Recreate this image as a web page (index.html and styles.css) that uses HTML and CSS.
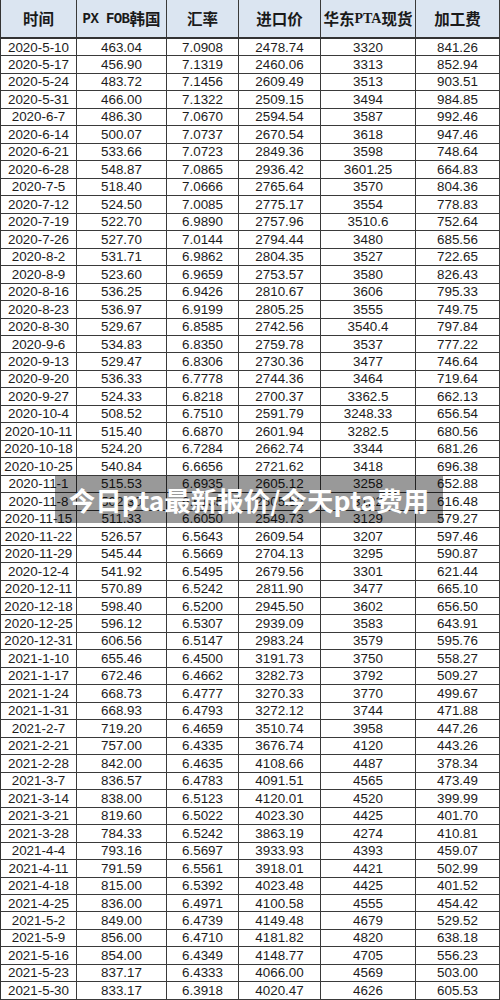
FILE: index.html
```html
<!DOCTYPE html>
<html lang="zh-CN">
<head>
<meta charset="utf-8">
<title>今日pta最新报价/今天pta费用</title>
<link rel="stylesheet" href="styles.css">
</head>
<body>
<div class="page">
  <div class="sheet">
    <div class="row head">
      <div class="c">时间</div>
      <div class="c"><span class="mono">PX FOB</span>韩国</div>
      <div class="c">汇率</div>
      <div class="c">进口价</div>
      <div class="c">华东<span class="serif">PTA</span>现货</div>
      <div class="c">加工费</div>
    </div>
    <div class="row"><div class="c">2020-5-10</div><div class="c">463.04</div><div class="c">7.0908</div><div class="c">2478.74</div><div class="c">3320</div><div class="c">841.26</div></div>
    <div class="row"><div class="c">2020-5-17</div><div class="c">456.90</div><div class="c">7.1319</div><div class="c">2460.06</div><div class="c">3313</div><div class="c">852.94</div></div>
    <div class="row"><div class="c">2020-5-24</div><div class="c">483.72</div><div class="c">7.1456</div><div class="c">2609.49</div><div class="c">3513</div><div class="c">903.51</div></div>
    <div class="row"><div class="c">2020-5-31</div><div class="c">466.00</div><div class="c">7.1322</div><div class="c">2509.15</div><div class="c">3494</div><div class="c">984.85</div></div>
    <div class="row"><div class="c">2020-6-7</div><div class="c">486.30</div><div class="c">7.0670</div><div class="c">2594.54</div><div class="c">3587</div><div class="c">992.46</div></div>
    <div class="row"><div class="c">2020-6-14</div><div class="c">500.07</div><div class="c">7.0737</div><div class="c">2670.54</div><div class="c">3618</div><div class="c">947.46</div></div>
    <div class="row"><div class="c">2020-6-21</div><div class="c">533.66</div><div class="c">7.0723</div><div class="c">2849.36</div><div class="c">3598</div><div class="c">748.64</div></div>
    <div class="row"><div class="c">2020-6-28</div><div class="c">548.87</div><div class="c">7.0865</div><div class="c">2936.42</div><div class="c">3601.25</div><div class="c">664.83</div></div>
    <div class="row"><div class="c">2020-7-5</div><div class="c">518.40</div><div class="c">7.0666</div><div class="c">2765.64</div><div class="c">3570</div><div class="c">804.36</div></div>
    <div class="row"><div class="c">2020-7-12</div><div class="c">524.50</div><div class="c">7.0085</div><div class="c">2775.17</div><div class="c">3554</div><div class="c">778.83</div></div>
    <div class="row"><div class="c">2020-7-19</div><div class="c">522.70</div><div class="c">6.9890</div><div class="c">2757.96</div><div class="c">3510.6</div><div class="c">752.64</div></div>
    <div class="row"><div class="c">2020-7-26</div><div class="c">527.70</div><div class="c">7.0144</div><div class="c">2794.44</div><div class="c">3480</div><div class="c">685.56</div></div>
    <div class="row"><div class="c">2020-8-2</div><div class="c">531.71</div><div class="c">6.9862</div><div class="c">2804.35</div><div class="c">3527</div><div class="c">722.65</div></div>
    <div class="row"><div class="c">2020-8-9</div><div class="c">523.60</div><div class="c">6.9659</div><div class="c">2753.57</div><div class="c">3580</div><div class="c">826.43</div></div>
    <div class="row"><div class="c">2020-8-16</div><div class="c">536.25</div><div class="c">6.9426</div><div class="c">2810.67</div><div class="c">3606</div><div class="c">795.33</div></div>
    <div class="row"><div class="c">2020-8-23</div><div class="c">536.97</div><div class="c">6.9199</div><div class="c">2805.25</div><div class="c">3555</div><div class="c">749.75</div></div>
    <div class="row"><div class="c">2020-8-30</div><div class="c">529.67</div><div class="c">6.8585</div><div class="c">2742.56</div><div class="c">3540.4</div><div class="c">797.84</div></div>
    <div class="row"><div class="c">2020-9-6</div><div class="c">534.83</div><div class="c">6.8350</div><div class="c">2759.78</div><div class="c">3537</div><div class="c">777.22</div></div>
    <div class="row"><div class="c">2020-9-13</div><div class="c">529.47</div><div class="c">6.8306</div><div class="c">2730.36</div><div class="c">3477</div><div class="c">746.64</div></div>
    <div class="row"><div class="c">2020-9-20</div><div class="c">536.33</div><div class="c">6.7778</div><div class="c">2744.36</div><div class="c">3464</div><div class="c">719.64</div></div>
    <div class="row"><div class="c">2020-9-27</div><div class="c">524.33</div><div class="c">6.8218</div><div class="c">2700.37</div><div class="c">3362.5</div><div class="c">662.13</div></div>
    <div class="row"><div class="c">2020-10-4</div><div class="c">508.52</div><div class="c">6.7510</div><div class="c">2591.79</div><div class="c">3248.33</div><div class="c">656.54</div></div>
    <div class="row"><div class="c">2020-10-11</div><div class="c">515.40</div><div class="c">6.6870</div><div class="c">2601.94</div><div class="c">3282.5</div><div class="c">680.56</div></div>
    <div class="row"><div class="c">2020-10-18</div><div class="c">524.20</div><div class="c">6.7284</div><div class="c">2662.74</div><div class="c">3344</div><div class="c">681.26</div></div>
    <div class="row"><div class="c">2020-10-25</div><div class="c">540.84</div><div class="c">6.6656</div><div class="c">2721.62</div><div class="c">3418</div><div class="c">696.38</div></div>
    <div class="row"><div class="c">2020-11-1</div><div class="c">515.53</div><div class="c">6.6935</div><div class="c">2605.12</div><div class="c">3258</div><div class="c">652.88</div></div>
    <div class="row"><div class="c">2020-11-8</div><div class="c">502.30</div><div class="c">6.6135</div><div class="c">2505.52</div><div class="c">3122</div><div class="c">616.48</div></div>
    <div class="row"><div class="c">2020-11-15</div><div class="c">511.33</div><div class="c">6.6050</div><div class="c">2549.73</div><div class="c">3129</div><div class="c">579.27</div></div>
    <div class="row"><div class="c">2020-11-22</div><div class="c">526.57</div><div class="c">6.5643</div><div class="c">2609.54</div><div class="c">3207</div><div class="c">597.46</div></div>
    <div class="row"><div class="c">2020-11-29</div><div class="c">545.44</div><div class="c">6.5669</div><div class="c">2704.13</div><div class="c">3295</div><div class="c">590.87</div></div>
    <div class="row"><div class="c">2020-12-4</div><div class="c">541.92</div><div class="c">6.5495</div><div class="c">2679.56</div><div class="c">3301</div><div class="c">621.44</div></div>
    <div class="row"><div class="c">2020-12-11</div><div class="c">570.89</div><div class="c">6.5242</div><div class="c">2811.90</div><div class="c">3477</div><div class="c">665.10</div></div>
    <div class="row"><div class="c">2020-12-18</div><div class="c">598.40</div><div class="c">6.5200</div><div class="c">2945.50</div><div class="c">3602</div><div class="c">656.50</div></div>
    <div class="row"><div class="c">2020-12-25</div><div class="c">596.12</div><div class="c">6.5307</div><div class="c">2939.09</div><div class="c">3583</div><div class="c">643.91</div></div>
    <div class="row"><div class="c">2020-12-31</div><div class="c">606.56</div><div class="c">6.5147</div><div class="c">2983.24</div><div class="c">3579</div><div class="c">595.76</div></div>
    <div class="row"><div class="c">2021-1-10</div><div class="c">655.46</div><div class="c">6.4500</div><div class="c">3191.73</div><div class="c">3750</div><div class="c">558.27</div></div>
    <div class="row"><div class="c">2021-1-17</div><div class="c">672.46</div><div class="c">6.4662</div><div class="c">3282.73</div><div class="c">3792</div><div class="c">509.27</div></div>
    <div class="row"><div class="c">2021-1-24</div><div class="c">668.73</div><div class="c">6.4777</div><div class="c">3270.33</div><div class="c">3770</div><div class="c">499.67</div></div>
    <div class="row"><div class="c">2021-1-31</div><div class="c">668.93</div><div class="c">6.4793</div><div class="c">3272.12</div><div class="c">3744</div><div class="c">471.88</div></div>
    <div class="row"><div class="c">2021-2-7</div><div class="c">719.20</div><div class="c">6.4659</div><div class="c">3510.74</div><div class="c">3958</div><div class="c">447.26</div></div>
    <div class="row"><div class="c">2021-2-21</div><div class="c">757.00</div><div class="c">6.4335</div><div class="c">3676.74</div><div class="c">4120</div><div class="c">443.26</div></div>
    <div class="row"><div class="c">2021-2-28</div><div class="c">842.00</div><div class="c">6.4635</div><div class="c">4108.66</div><div class="c">4487</div><div class="c">378.34</div></div>
    <div class="row"><div class="c">2021-3-7</div><div class="c">836.57</div><div class="c">6.4783</div><div class="c">4091.51</div><div class="c">4565</div><div class="c">473.49</div></div>
    <div class="row"><div class="c">2021-3-14</div><div class="c">838.00</div><div class="c">6.5123</div><div class="c">4120.01</div><div class="c">4520</div><div class="c">399.99</div></div>
    <div class="row"><div class="c">2021-3-21</div><div class="c">819.60</div><div class="c">6.5022</div><div class="c">4023.30</div><div class="c">4425</div><div class="c">401.70</div></div>
    <div class="row"><div class="c">2021-3-28</div><div class="c">784.33</div><div class="c">6.5242</div><div class="c">3863.19</div><div class="c">4274</div><div class="c">410.81</div></div>
    <div class="row"><div class="c">2021-4-4</div><div class="c">793.16</div><div class="c">6.5697</div><div class="c">3933.93</div><div class="c">4393</div><div class="c">459.07</div></div>
    <div class="row"><div class="c">2021-4-11</div><div class="c">791.59</div><div class="c">6.5561</div><div class="c">3918.01</div><div class="c">4421</div><div class="c">502.99</div></div>
    <div class="row"><div class="c">2021-4-18</div><div class="c">815.00</div><div class="c">6.5392</div><div class="c">4023.48</div><div class="c">4425</div><div class="c">401.52</div></div>
    <div class="row"><div class="c">2021-4-25</div><div class="c">836.00</div><div class="c">6.4971</div><div class="c">4100.58</div><div class="c">4555</div><div class="c">454.42</div></div>
    <div class="row"><div class="c">2021-5-2</div><div class="c">849.00</div><div class="c">6.4739</div><div class="c">4149.48</div><div class="c">4679</div><div class="c">529.52</div></div>
    <div class="row"><div class="c">2021-5-9</div><div class="c">856.00</div><div class="c">6.4710</div><div class="c">4181.82</div><div class="c">4820</div><div class="c">638.18</div></div>
    <div class="row"><div class="c">2021-5-16</div><div class="c">854.00</div><div class="c">6.4349</div><div class="c">4148.77</div><div class="c">4705</div><div class="c">556.23</div></div>
    <div class="row"><div class="c">2021-5-23</div><div class="c">837.17</div><div class="c">6.4333</div><div class="c">4066.00</div><div class="c">4569</div><div class="c">503.00</div></div>
    <div class="row"><div class="c">2021-5-30</div><div class="c">833.17</div><div class="c">6.3918</div><div class="c">4020.47</div><div class="c">4626</div><div class="c">605.53</div></div>
  </div>
  <div class="banner">今日pta最新报价/今天pta费用</div>
</div>
</body>
</html>
```

FILE: styles.css
```css
html, body {
  margin: 0;
  padding: 0;
  background: #ffffff;
}

.page {
  position: relative;
  width: 500px;
  height: 1000px;
  overflow: hidden;
}

.sheet {
  display: flex;
  flex-direction: column;
  width: 500px;
  box-sizing: border-box;
  border-left: 1px solid #333333;
  font-family: "Liberation Sans", Arial, sans-serif;
  font-size: 13.4px;
  color: #1c1c1c;
}

.row {
  display: grid;
  grid-template-columns: 76px 90px 72px 82px 95px 84px;
  height: 17.47px;
  box-sizing: border-box;
  border-bottom: 1px solid #3a3a3a;
}

.c {
  display: flex;
  align-items: center;
  justify-content: center;
  border-right: 1px solid #3a3a3a;
  box-sizing: border-box;
  white-space: nowrap;
  line-height: 1;
}

.head {
  height: 39px;
  background: #dbe5f1;
  border-bottom: 2px solid #333333;
  font-family: "Noto Sans CJK SC", "Noto Sans", sans-serif;
  font-weight: 700;
  font-size: 15.5px;
  color: #1a1a1a;
}

.head .c {
  padding-top: 1px;
}

.mono {
  font-family: "Liberation Mono", monospace;
  font-size: 14px;
  font-weight: 700;
  letter-spacing: -0.6px;
}

.serif {
  font-family: "Liberation Serif", serif;
  font-size: 14px;
  font-weight: 700;
}

.banner {
  position: absolute;
  left: 55px;
  top: 476px;
  width: 388px;
  height: 47px;
  display: flex;
  align-items: center;
  justify-content: center;
  background: rgba(0, 0, 0, 0.4);
  color: #ffffff;
  font-family: "Noto Sans CJK SC", "Noto Sans", sans-serif;
  font-weight: 700;
  font-size: 26.5px;
  white-space: nowrap;
}
```
